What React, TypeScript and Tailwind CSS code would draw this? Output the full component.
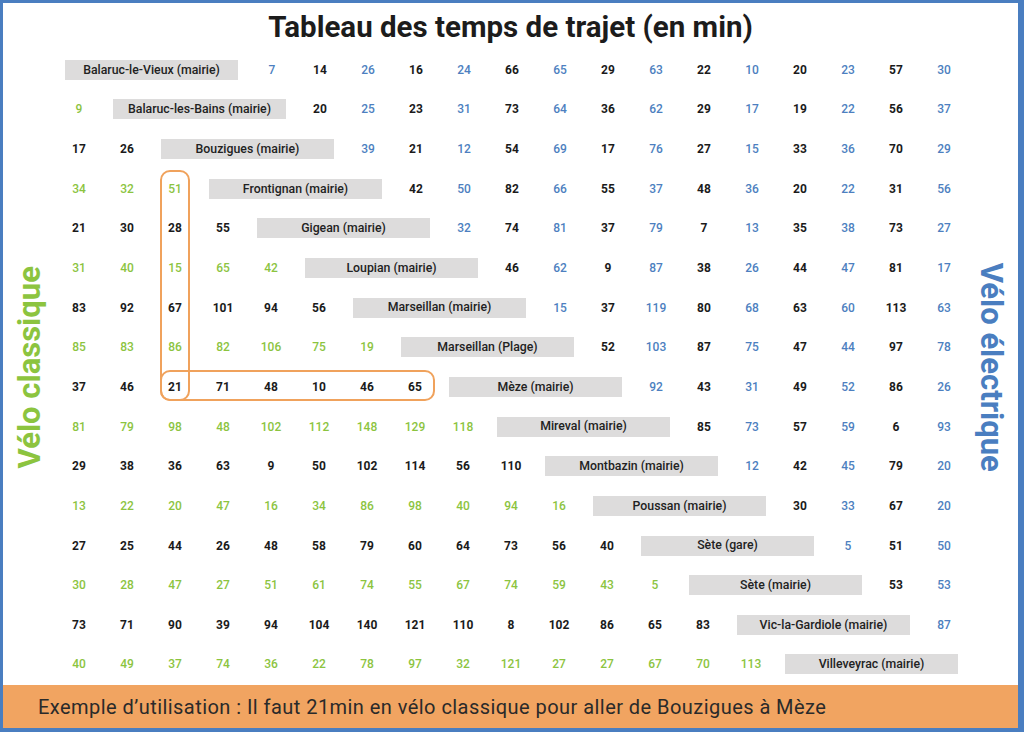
const labels = [
  'Balaruc-le-Vieux (mairie)',
  'Balaruc-les-Bains (mairie)',
  'Bouzigues (mairie)',
  'Frontignan (mairie)',
  'Gigean (mairie)',
  'Loupian (mairie)',
  'Marseillan (mairie)',
  'Marseillan (Plage)',
  'Mèze (mairie)',
  'Mireval (mairie)',
  'Montbazin (mairie)',
  'Poussan (mairie)',
  'Sète (gare)',
  'Sète (mairie)',
  'Vic-la-Gardiole (mairie)',
  'Villeveyrac (mairie)',
];

// each row: values left of the label, then values right of it
const rows: number[][] = [
  [7, 14, 26, 16, 24, 66, 65, 29, 63, 22, 10, 20, 23, 57, 30],
  [9, 20, 25, 23, 31, 73, 64, 36, 62, 29, 17, 19, 22, 56, 37],
  [17, 26, 39, 21, 12, 54, 69, 17, 76, 27, 15, 33, 36, 70, 29],
  [34, 32, 51, 42, 50, 82, 66, 55, 37, 48, 36, 20, 22, 31, 56],
  [21, 30, 28, 55, 32, 74, 81, 37, 79, 7, 13, 35, 38, 73, 27],
  [31, 40, 15, 65, 42, 46, 62, 9, 87, 38, 26, 44, 47, 81, 17],
  [83, 92, 67, 101, 94, 56, 15, 37, 119, 80, 68, 63, 60, 113, 63],
  [85, 83, 86, 82, 106, 75, 19, 52, 103, 87, 75, 47, 44, 97, 78],
  [37, 46, 21, 71, 48, 10, 46, 65, 92, 43, 31, 49, 52, 86, 26],
  [81, 79, 98, 48, 102, 112, 148, 129, 118, 85, 73, 57, 59, 6, 93],
  [29, 38, 36, 63, 9, 50, 102, 114, 56, 110, 12, 42, 45, 79, 20],
  [13, 22, 20, 47, 16, 34, 86, 98, 40, 94, 16, 30, 33, 67, 20],
  [27, 25, 44, 26, 48, 58, 79, 60, 64, 73, 56, 40, 5, 51, 50],
  [30, 28, 47, 27, 51, 61, 74, 55, 67, 74, 59, 43, 5, 53, 53],
  [73, 71, 90, 39, 94, 104, 140, 121, 110, 8, 102, 86, 65, 83, 87],
  [40, 49, 37, 74, 36, 22, 78, 97, 32, 121, 27, 27, 67, 70, 113],
];

function Cell({ value, tone }: { value: number; tone: 'black' | 'green' | 'blue' }) {
  return (
    <div
      className={
        tone === 'black'
          ? 'w-[48px] shrink-0 text-center text-[12px] font-bold text-[#1b1b1b]'
          : tone === 'green'
          ? 'w-[48px] shrink-0 text-center text-[12px] font-medium text-[#8cc43f]'
          : 'w-[48px] shrink-0 text-center text-[12px] font-medium text-[#4d7fc0]'
      }
    >
      {value}
    </div>
  );
}

function Row({ index }: { index: number }) {
  const values = rows[index];
  const left = values.slice(0, index);
  const right = values.slice(index);
  return (
    <div className="flex h-[39.65px] items-center">
      {left.map((v, j) => (
        <Cell key={'l' + j} value={v} tone={index % 2 === 1 ? 'green' : 'black'} />
      ))}
      <div className="w-[193px] shrink-0 px-[10px]">
        <div className="flex h-[20px] items-center justify-center bg-[#dddcdc] text-[12.3px] font-medium text-[#222]">
          {labels[index]}
        </div>
      </div>
      {right.map((v, k) => {
        const col = index + 1 + k;
        return <Cell key={'r' + k} value={v} tone={col % 2 === 1 ? 'blue' : 'black'} />;
      })}
    </div>
  );
}

export default function App() {
  return (
    <div className="flex h-[732px] w-[1024px] flex-col border-t-[3px] border-r-[6px] border-b-[4px] border-l-[3px] border-[#4a7ec0] bg-white font-['Roboto','Liberation_Sans',sans-serif]">
      <h1 className="flex h-[47px] shrink-0 items-center justify-center pt-[2px] text-[29.5px] font-bold text-[#1c1c1c]">
        Tableau des temps de trajet (en min)
      </h1>

      <div className="flex">
        <div className="flex w-[52px] shrink-0 items-center justify-center pl-[3px]">
          <span className="-rotate-90 whitespace-nowrap text-[31px] font-bold text-[#8cc43f]">
            Vélo classique
          </span>
        </div>

        <div className="relative w-[913px] shrink-0">
          {rows.map((_, i) => (
            <Row key={i} index={i} />
          ))}
          {/* example highlight: Bouzigues -> Mèze */}
          <div className="absolute top-[120px] left-[105px] h-[231px] w-[30px] rounded-[10px] border-2 border-[#f0a25c]" />
          <div className="absolute top-[320px] left-[105px] h-[31px] w-[275px] rounded-[10px] border-2 border-[#f0a25c]" />
        </div>

        <div className="flex w-[50px] shrink-0 items-center justify-center pr-[4px]">
          <span className="rotate-90 whitespace-nowrap text-[31px] font-bold text-[#4a7ec0]">
            Vélo électrique
          </span>
        </div>
      </div>

      <div className="mt-auto flex h-[43px] shrink-0 items-center bg-[#f1a461] pl-[35px] text-[20px] tracking-[0.45px] text-[#2a2a2a]">
        Exemple d’utilisation : Il faut 21min en vélo classique pour aller de Bouzigues à Mèze
      </div>
    </div>
  );
}
